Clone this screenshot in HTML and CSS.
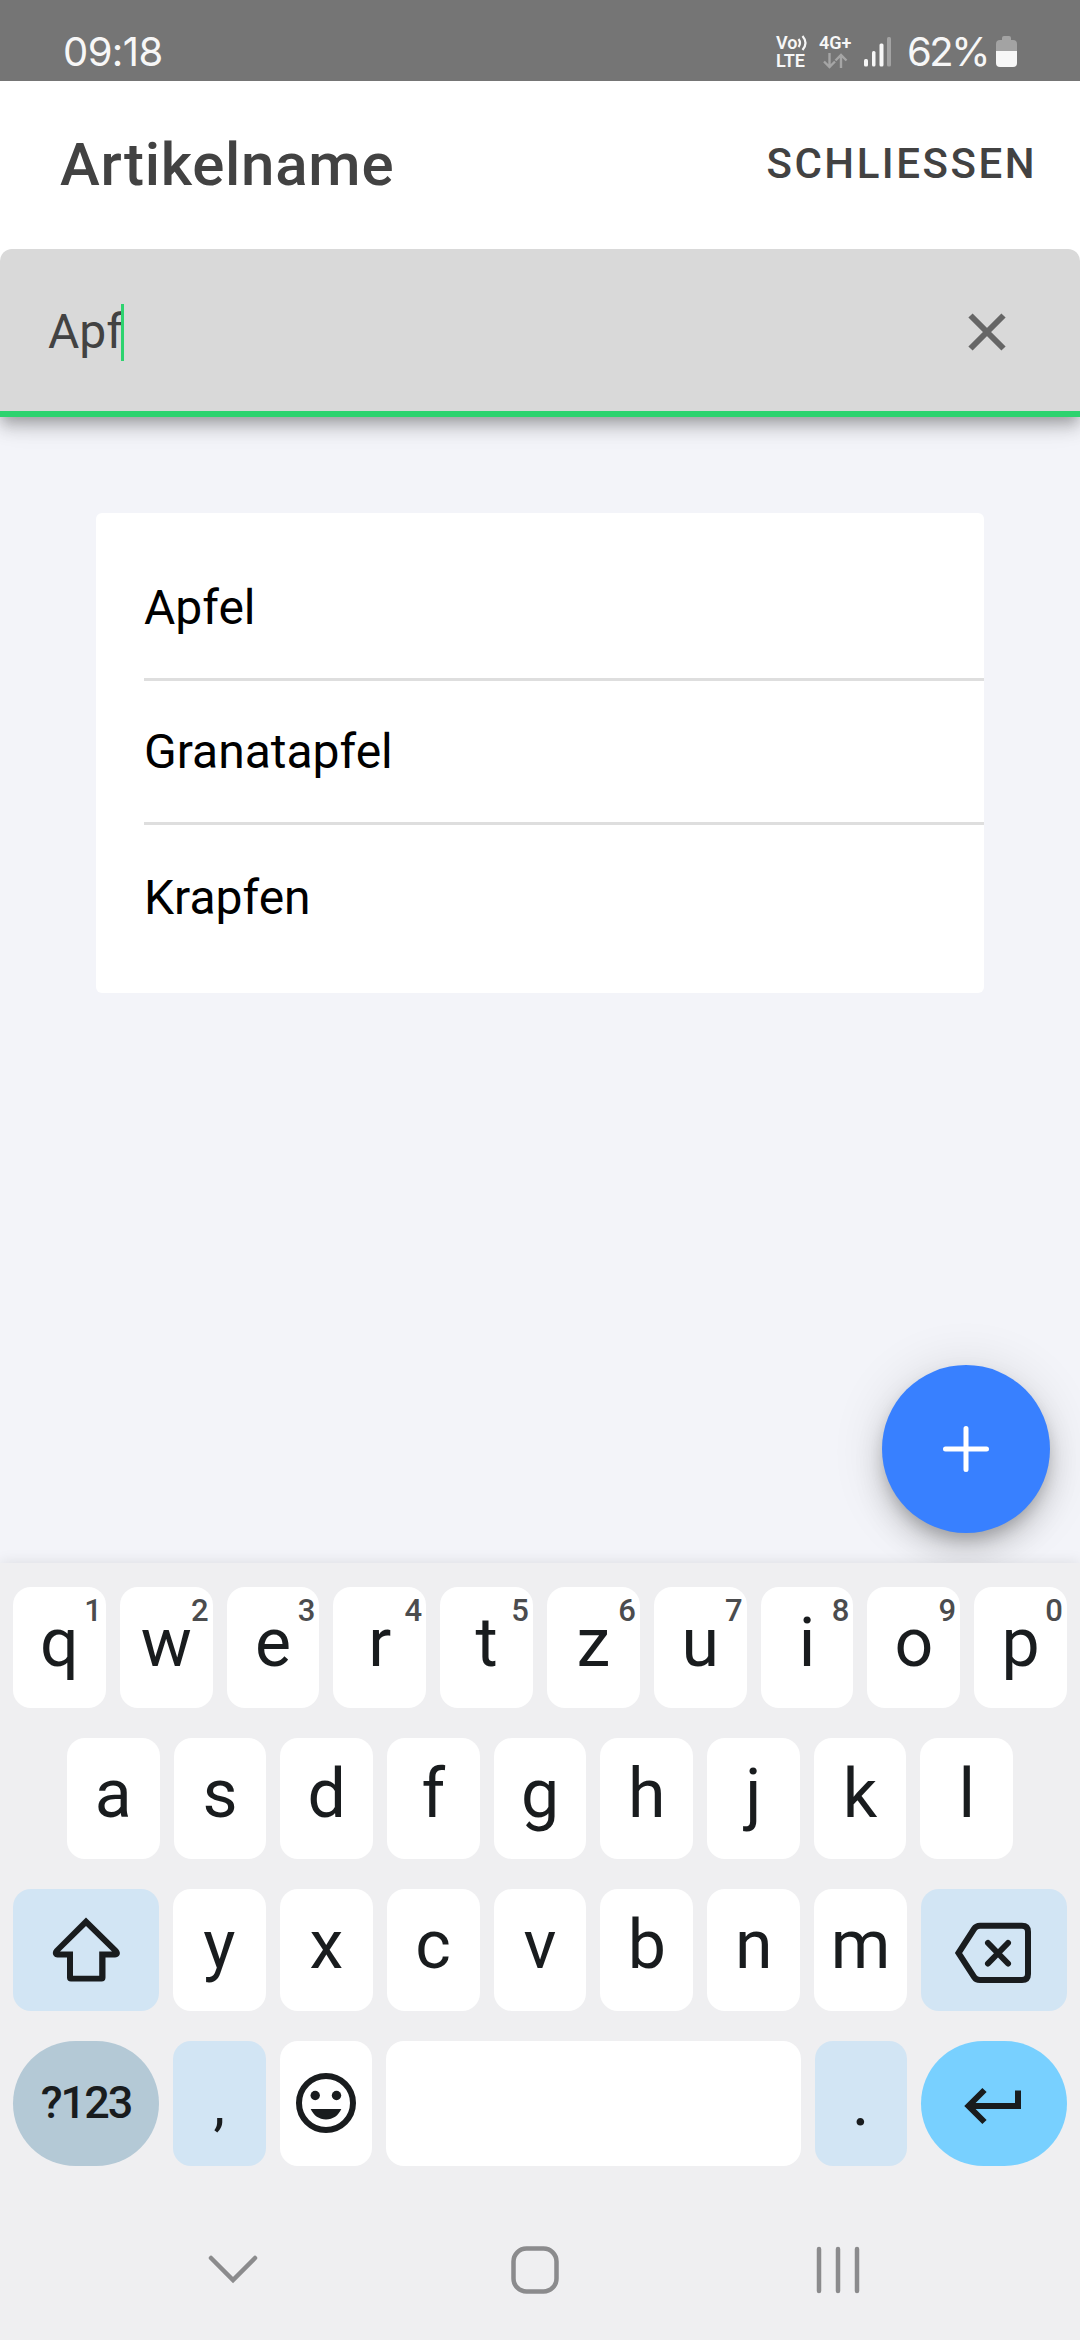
FILE: index.html
```html
<!DOCTYPE html>
<html lang="de">
<head>
<meta charset="utf-8">
<title>Artikelname</title>
<link rel="stylesheet" href="styles.css">
</head>
<body>
<div class="screen">
  <div class="status">
    <span class="clock">09:18</span>
    <div class="status-right">
      <div class="volte">
        <div class="volte-top">Vo<svg width="11" height="17" viewBox="0 0 11 17" fill="none" stroke="#f7f7f7" stroke-width="2.2"><path d="M1.5 5q3 4 0 8M5.500 2q6 7 0 14"/></svg></div>
        <div>LTE</div>
      </div>
      <div class="net">
        <div>4G+</div>
        <svg width="26" height="16" viewBox="0 0 26 16" fill="none" stroke="#a5a5a5" stroke-width="2.400"><path d="M7.500 0V14M2 8.500l5.500 5.500 5.500-5.500M19 15V2M13.500 7.500 19 2l5.500 5.500"/></svg>
      </div>
      <svg class="bars" width="28" height="30" viewBox="0 0 28 30" fill="#f7f7f7"><rect x="0" y="22" width="4" height="7.500" rx="1.500"/><rect x="8" y="14" width="3.500" height="15.500" rx="1.500"/><rect x="15.500" y="6.500" width="4" height="23" rx="1.500"/><rect x="23" y="0" width="4" height="29.500" rx="1.500" fill="#a3a3a3"/></svg>
      <span class="percent">62%</span>
      <svg class="battery" width="21" height="31" viewBox="0 0 21 31"><path d="M6 4V2q0-2 2-2h5q2 0 2 2v2h2q4 0 4 4v7H0V8q0-4 4-4z" fill="#a3a3a3"/><path d="M0 15h21v12q0 4-4 4H4q-4 0-4-4z" fill="#f7f7f7"/></svg>
    </div>
  </div>
  <header class="header">
    <div class="toolbar">
      <h1 class="title">Artikelname</h1>
      <span class="close">SCHLIESSEN</span>
    </div>
    <div class="field">
      <span class="value">Apf</span><span class="caret"></span>
      <svg class="clear" width="38" height="38" viewBox="0 0 38 38" fill="none" stroke="#666" stroke-width="6"><path d="M2.500 2.500l33 33M35.500 2.500l-33 33"/></svg>
    </div>
  </header>
  <main class="content">
    <ul class="list">
      <li>Apfel</li>
      <li>Granatapfel</li>
      <li>Krapfen</li>
    </ul>
    <div class="fab"><svg width="46" height="46" viewBox="0 0 46 46" fill="none" stroke="#fff" stroke-width="5" stroke-linecap="round"><path d="M23 2.500v41M2.500 23h41"/></svg></div>
  </main>
  <div class="keyboard">
    <div class="row">
      <div class="key">q<sup>1</sup></div><div class="key">w<sup>2</sup></div><div class="key">e<sup>3</sup></div><div class="key">r<sup>4</sup></div><div class="key">t<sup>5</sup></div><div class="key">z<sup>6</sup></div><div class="key">u<sup>7</sup></div><div class="key">i<sup>8</sup></div><div class="key">o<sup>9</sup></div><div class="key">p<sup>0</sup></div>
    </div>
    <div class="row row-inset">
      <div class="key">a</div><div class="key">s</div><div class="key">d</div><div class="key">f</div><div class="key">g</div><div class="key">h</div><div class="key">j</div><div class="key">k</div><div class="key">l</div>
    </div>
    <div class="row row-third">
      <div class="key wide tint"><svg width="146" height="122" viewBox="0 0 146 122" fill="#191c1e" fill-rule="evenodd"><path d="M73 28.500 105 60c4 4.500 1 8.500-3 8.500h-9.500v20q0 4-4 4H58q-4 0-4-4v-20h-9.500c-4 0-6.500-4.500-3-8.500zM73 37 47 62.500h13v24.200h26.200V62.500H99z"/></svg></div>
      <div class="key">y</div><div class="key">x</div><div class="key">c</div><div class="key">v</div><div class="key">b</div><div class="key">n</div><div class="key">m</div>
      <div class="key wide tint"><svg width="146" height="122" viewBox="0 0 146 122" fill="none" stroke="#191c1e" stroke-width="6"><path d="M37.500 64 53 40q2-3.200 6-3.200h42q6 0 6 6V85q0 6-6 6H59q-4 0-6-3.200z"/><path d="M67 54l20 20.500M87 54 67 74.500" stroke-linecap="round"/></svg></div>
    </div>
    <div class="row row-bottom">
      <div class="key wide mode">?123</div>
      <div class="key tint punct comma">,</div>
      <div class="key emoji"><svg width="92" height="125" viewBox="0 0 92 125" fill="#191c1e"><circle cx="46" cy="62" r="27" fill="none" stroke="#191c1e" stroke-width="6"/><circle cx="35.200" cy="54.500" r="4.700"/><circle cx="56.500" cy="54.500" r="4.700"/><path d="M30.700 68h30.600c-2.800 6.400-8.400 10.500-15.300 10.500S33.500 74.400 30.700 68z"/></svg></div>
      <div class="key space"></div>
      <div class="key tint punct">.</div>
      <div class="key wide enter"><svg width="146" height="125" viewBox="0 0 146 125" fill="none" stroke="#191c1e" stroke-width="6"><path d="M97 49.500V65H48M63.500 49l-16 16 16 16"/></svg></div>
    </div>
    <nav class="nav">
      <svg width="50" height="48" viewBox="0 0 50 48"><path d="M3 12l22 22 22-22"/></svg>
      <svg class="home" width="48" height="48" viewBox="0 0 48 48"><rect x="2.500" y="2.500" width="43" height="43" rx="13"/></svg>
      <svg class="recents" width="44" height="48" viewBox="0 0 44 48"><path d="M3 3v42M22 3v42M41 3v42"/></svg>
    </nav>
  </div>
</div>
</body>
</html>
```
FILE: styles.css
```css
* { box-sizing: border-box; margin: 0; padding: 0; }
body { font-family: Roboto, sans-serif; background: #efeff1; }
svg { display: block; flex: none; }
.screen { width: 1080px; height: 2340px; display: flex; flex-direction: column; overflow: hidden; }

.status { height: 81px; flex: none; position: relative; z-index: 2; background: #757575; color: #f7f7f7; display: flex; justify-content: space-between; padding: 28px 63px 0 63px; }
.clock, .percent { font-family: Inter, Roboto, sans-serif; font-size: 40px; line-height: 47px; font-weight: 400; }
.clock { letter-spacing: -.6px; }
.status-right { display: flex; align-items: flex-start; }
.volte, .net { font-size: 18px; line-height: 18px; font-weight: 600; margin-top: 6px; }
.volte { width: 32px; margin-right: 11px; }
.volte-top { display: flex; }
.net { width: 34px; margin-right: 11px; }
.net svg { margin: 1px 0 0 3px; }
.bars { margin: 9px 15px 0 0; }
.percent { width: 82px; white-space: nowrap; letter-spacing: -2.500px; }
.battery { margin: 8px 0 0 7px; }

.header { flex: none; position: relative; z-index: 1; box-shadow: 0 6px 12px -3px rgba(0,0,0,.2), 0 12px 15px 0 rgba(0,0,0,.14), 0 3px 30px 0 rgba(0,0,0,.12); background: #fff; }
.toolbar { height: 168px; display: flex; justify-content: space-between; align-items: center; padding: 0 43px 0 60px; color: #424242; }
.title { font-size: 60px; font-weight: 500; letter-spacing: .75px; line-height: 70px; }
.close { font-size: 42px; font-weight: 500; letter-spacing: 2.520px; line-height: 50px; margin-bottom: 2px; }
.field { height: 168px; background: #d9d9d9; border-radius: 12px 12px 0 0; border-bottom: 6px solid #2dd36f; display: flex; align-items: center; padding: 4px 74px 0 48px; color: #424242; font-size: 48px; }
.value { margin-bottom: 2px; }
.caret { width: 3px; height: 57px; background: #2dd36f; margin-left: -2px; }
.clear { margin-left: auto; }

.content { flex: 1; position: relative; background: #f3f4f9; padding: 96px; }
.list { list-style: none; background: #fff; border-radius: 6px; padding: 24px 0 24px 48px; font-size: 48px; color: #000; }
.list li { height: 144px; display: flex; align-items: center; border-bottom: 3px solid #dedede; }
.list li:last-child { border-bottom: 0; }
.fab { position: absolute; right: 30px; bottom: 30px; width: 168px; height: 168px; border-radius: 50%; background: #3880ff; display: grid; place-items: center; box-shadow: 0 9px 15px -3px rgba(0,0,0,.2), 0 18px 30px 0 rgba(0,0,0,.14), 0 3px 54px 0 rgba(0,0,0,.12); }

.keyboard { height: 777px; flex: none; position: relative; z-index: 1; background: #efeff1; box-shadow: 0 0 14px rgba(0,0,0,.1); padding-top: 24px; display: flex; flex-direction: column; gap: 30px; }
.row { display: flex; gap: 14px; padding: 0 13px; height: 121px; }
.row-inset { padding: 0 67px; }
.row-third { height: 122px; }
.row-bottom { height: 125px; }
.key { flex: 1 1 0; min-width: 0; position: relative; background: #fff; border-radius: 18px; color: #191c1e; font-size: 68px; line-height: 113px; text-align: center; display: flex; justify-content: center; }
.key sup { position: absolute; top: 6px; right: 4px; font-size: 31px; line-height: 36px; font-weight: 500; color: #4b4c4e; }
.wide { flex: 0 0 146px; }
.tint { background: #d2e5f4; }
.mode { background: #b4c9d6; border-radius: 63px; font-size: 45px; font-weight: 500; line-height: 123px; letter-spacing: -2px; }
.punct, .emoji { flex: 0 0 92.500px; line-height: 123px; }
.comma { font-size: 58px; line-height: 127px; }
.enter { background: #78d0ff; border-radius: 63px; }

.nav { flex: none; display: flex; padding: 50px 0 0 208px; }
.nav svg { fill: none; stroke: #8b8b8d; stroke-width: 4.500; stroke-linecap: round; }
.home { margin-left: 253px; }
.recents { margin-left: 257px; }
```
